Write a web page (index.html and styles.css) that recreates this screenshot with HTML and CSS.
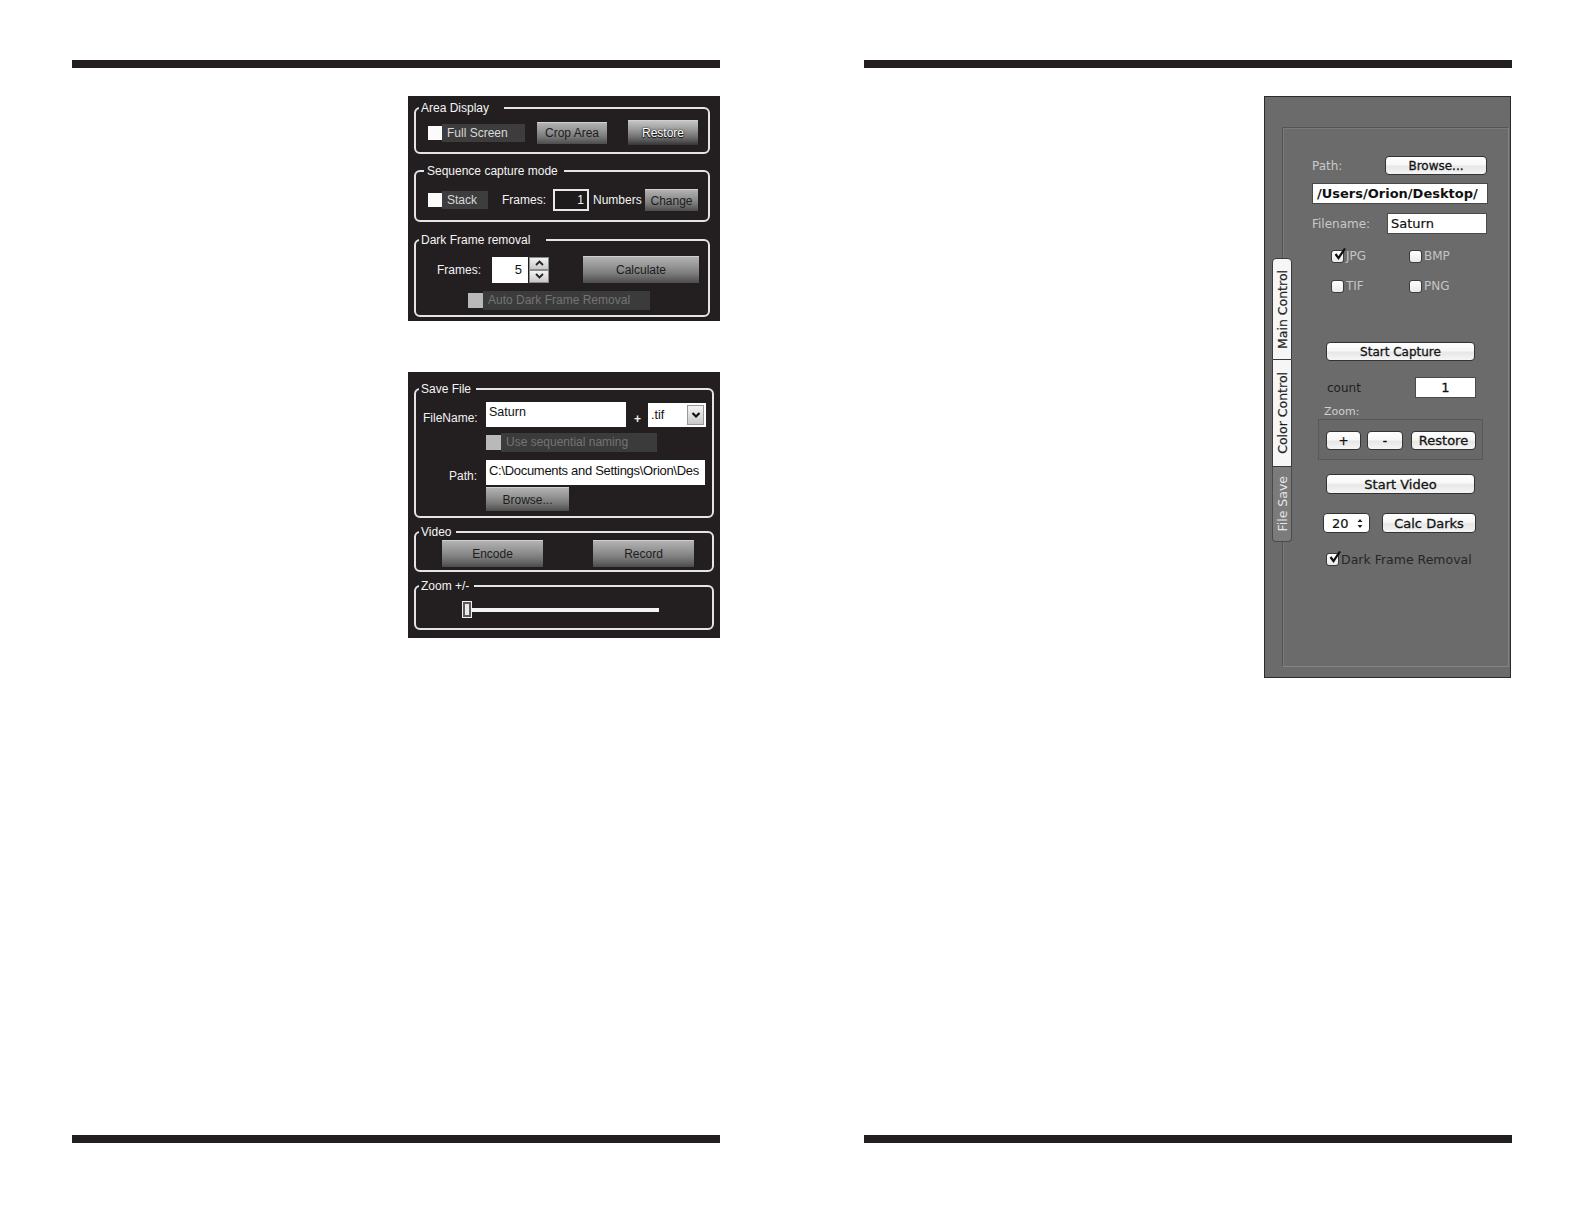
FILE: index.html
```html
<!DOCTYPE html>
<html>
<head>
<meta charset="utf-8">
<link rel="stylesheet" href="styles.css">
</head>
<body>
<div class="spread">
  <section class="page">
    <div class="rule"></div>
    <div class="page-body left-body">
      <div class="win-panel panel-a">
        <div class="group g-area">
          <span class="legend lg-area">Area Display</span>
          <div class="row row-area">
            <div class="wcheck"><span class="wbox"></span><span class="wlabel wl-full">Full Screen</span></div>
            <span class="wbtn b-crop">Crop Area</span>
            <span class="wbtn wbtn-hi b-restore">Restore</span>
          </div>
        </div>
        <div class="group g-seq">
          <span class="legend lg-seq">Sequence capture mode</span>
          <div class="row row-seq">
            <div class="wcheck"><span class="wbox"></span><span class="wlabel wl-stack">Stack</span></div>
            <span class="wtext t-frames1">Frames:</span>
            <span class="winput-dark">1</span>
            <span class="wtext t-numbers">Numbers</span>
            <span class="wbtn b-change">Change</span>
          </div>
        </div>
        <div class="group g-dark">
          <span class="legend lg-dark">Dark Frame removal</span>
          <div class="row row-dark1">
            <span class="wtext t-frames2">Frames:</span>
            <span class="winput w-five">5</span>
            <span class="wspin">
              <span class="spin-btn"><svg width="9" height="6" viewBox="0 0 9 6"><path d="M1 5 L4.5 1.5 L8 5" fill="none" stroke="#222" stroke-width="1.8"/></svg></span>
              <span class="spin-btn"><svg width="9" height="6" viewBox="0 0 9 6"><path d="M1 1 L4.5 4.5 L8 1" fill="none" stroke="#222" stroke-width="1.8"/></svg></span>
            </span>
            <span class="wbtn b-calc">Calculate</span>
          </div>
          <div class="row row-dark2">
            <div class="wcheck wcheck-off"><span class="wbox"></span><span class="wlabel wl-auto">Auto Dark Frame Removal</span></div>
          </div>
        </div>
      </div>

      <div class="win-panel panel-b">
        <div class="group g-save">
          <span class="legend lg-save">Save File</span>
          <div class="row row-fname">
            <span class="wtext t-fname">FileName:</span>
            <span class="winput w-saturn">Saturn</span>
            <span class="wtext t-plus">+</span>
            <span class="wselect"><span class="sel-text">.tif</span><span class="sel-btn"><svg width="10" height="8" viewBox="0 0 10 8"><path d="M1.5 2 L5 5.5 L8.5 2" fill="none" stroke="#111" stroke-width="2.2"/></svg></span></span>
          </div>
          <div class="row row-seqname">
            <div class="wcheck wcheck-off"><span class="wbox"></span><span class="wlabel wl-seqname">Use sequential naming</span></div>
          </div>
          <div class="row row-path">
            <span class="wtext t-path">Path:</span>
            <span class="winput w-path">C:\Documents and Settings\Orion\Des</span>
          </div>
          <div class="row row-browse">
            <span class="wbtn b-browse">Browse...</span>
          </div>
        </div>
        <div class="group g-video">
          <span class="legend lg-video">Video</span>
          <div class="row row-video">
            <span class="wbtn b-encode">Encode</span>
            <span class="wbtn b-record">Record</span>
          </div>
        </div>
        <div class="group g-zoom">
          <span class="legend lg-zoom">Zoom +/-</span>
          <div class="row row-zoom">
            <div class="slider"><span class="thumb"></span><span class="track"></span></div>
          </div>
        </div>
      </div>
    </div>
    <div class="rule"></div>
  </section>

  <section class="page">
    <div class="rule"></div>
    <div class="page-body right-body">
      <div class="mac-panel">
        <div class="tabs">
          <span class="tab tab-main"><span>Main Control</span></span>
          <span class="tab tab-color"><span>Color Control</span></span>
          <span class="tab tab-file"><span>File Save</span></span>
        </div>
        <div class="mac-box">
          <div class="mrow r-path">
            <span class="mlabel ml-path">Path:</span>
            <span class="mbtn b-mbrowse">Browse...</span>
          </div>
          <div class="mfield f-path">/Users/Orion/Desktop/</div>
          <div class="mrow r-fname">
            <span class="mlabel ml-fname">Filename:</span>
            <span class="mfield f-fname">Saturn</span>
          </div>
          <div class="mrow r-fmt">
            <span class="mcheck mc-first"><span class="mbox"><svg width="13" height="13" viewBox="0 0 13 13"><path d="M2.5 6 L5.5 10 L12 0.5" fill="none" stroke="#111" stroke-width="2.2"/></svg></span>JPG</span>
            <span class="mcheck"><span class="mbox"></span>BMP</span>
          </div>
          <div class="mrow r-fmt r-fmt2">
            <span class="mcheck mc-first"><span class="mbox"></span>TIF</span>
            <span class="mcheck"><span class="mbox"></span>PNG</span>
          </div>
          <span class="mbtn b-wide b-capture">Start Capture</span>
          <div class="mrow r-count">
            <span class="mlabel ml-count">count</span>
            <span class="mfield f-count">1</span>
          </div>
          <div class="ml-zoom">Zoom:</div>
          <div class="zoom-box">
            <span class="mbtn b-plus">+</span>
            <span class="mbtn b-minus">-</span>
            <span class="mbtn b-mrestore">Restore</span>
          </div>
          <span class="mbtn b-wide b-video">Start Video</span>
          <div class="mrow r-step">
            <span class="mstep"><span>20</span><svg width="6" height="11" viewBox="0 0 6 11"><path d="M0.5 4 L3 1 L5.5 4 Z M0.5 7 L3 10 L5.5 7 Z" fill="#222"/></svg></span>
            <span class="mbtn b-calcd">Calc Darks</span>
          </div>
          <div class="mrow r-dfr">
            <span class="mcheck"><span class="mbox"><svg width="13" height="13" viewBox="0 0 13 13"><path d="M2.5 6 L5.5 10 L12 0.5" fill="none" stroke="#111" stroke-width="2.2"/></svg></span>Dark Frame Removal</span>
          </div>
        </div>
      </div>
    </div>
    <div class="rule"></div>
  </section>
</div>
</body>
</html>
```

FILE: styles.css
```css
* { box-sizing: border-box; }
html, body { margin: 0; padding: 0; background: #ffffff; }
body { font-family: "Liberation Sans", Arial, sans-serif; }

.spread { display: flex; gap: 144px; padding: 60px 0 0 72px; }
.page { width: 648px; height: 1083px; display: flex; flex-direction: column; }
.rule { height: 8px; flex: none; background: #231f20; }
.page-body { flex: 1; }
.left-body { padding: 28px 0 0 336px; }
.right-body { padding: 28px 0 0 400px; }

/* ---------- Windows style panels ---------- */
.win-panel { width: 312px; background: #231f20; padding: 11px 0 0 6px; }
.panel-a { height: 225px; }
.panel-b { height: 266px; margin-top: 51px; padding-top: 16px; }

.group { position: relative; width: 296px; border: 2px solid #e4e4e4; border-radius: 6px; }
.panel-b .group { width: 300px; }
.g-area { height: 47px; }
.g-seq { height: 52px; margin-top: 16px; }
.g-dark { height: 78px; margin-top: 17px; }
.g-save { height: 130px; }
.g-video { height: 41px; margin-top: 13px; }
.g-zoom { height: 45px; margin-top: 13px; }

.legend {
  position: absolute; top: -9px; left: 3px;
  padding: 0 15px 0 2px; background: #231f20;
  color: #f4f4f4; font-size: 12px; line-height: 16px; white-space: nowrap;
}
.lg-seq { left: 8px; padding: 0 6px 0 3px; }
.lg-dark { padding-right: 16px; }
.lg-save, .lg-video, .lg-zoom { padding-right: 5px; }

.row { display: flex; align-items: center; }
.wtext { color: #f2f2f2; font-size: 12px; white-space: nowrap; }

.wcheck { display: flex; align-items: center; height: 18px; }
.wbox { width: 14px; height: 14px; background: #fbfbfb; flex: none; }
.wlabel { height: 18px; background: #3d3d3d; color: #d9d9d9; font-size: 12px; line-height: 18px; padding-left: 5px; white-space: nowrap; }
.wcheck-off .wbox { background: #b9b9b9; width: 15px; height: 15px; }
.wcheck-off .wlabel { color: #747474; background: #3b3b3b; height: 19px; line-height: 19px; }

.wbtn {
  display: flex; align-items: center; justify-content: center;
  height: 22px; font-size: 12px; color: #1c1c1c; white-space: nowrap;
  background: linear-gradient(#b2b2b2 0%, #969696 35%, #7a7a7a 65%, #4c4c4c 100%);
  border-top: 1px solid #d0d0d0;
}
.wbtn-hi {
  color: #ffffff;
  text-shadow: 0 0 2px #000, 0 1px 1px #000;
  background: linear-gradient(#c4c4c4 0%, #a2a2a2 30%, #6c6c6c 70%, #353535 100%);
}

/* area display */
.row-area { padding: 11px 0 0 12px; }
.wl-full { width: 83px; }
.b-crop { width: 70px; margin-left: 12px; }
.b-restore { width: 70px; height: 25px; margin-left: 21px; }

/* sequence */
.row-seq { padding: 17px 0 0 12px; height: 39px; }
.wl-stack { width: 46px; }
.t-frames1 { margin-left: 14px; width: 51px; }
.winput-dark {
  width: 36px; height: 22px; border: 2px solid #e8e8e8; background: #1e1b1c;
  color: #f2f2f2; font-size: 12px; text-align: right; padding: 1px 3px 0 0; line-height: 17px;
}
.t-numbers { margin-left: 4px; width: 52px; }
.b-change { width: 53px; margin-left: 0; }

/* dark frame */
.row-dark1 { padding: 15px 0 0 21px; height: 42px; }
.t-frames2 { width: 55px; }
.winput {
  display: block; background: #ffffff; color: #111; font-size: 12.5px; white-space: nowrap; overflow: hidden;
}
.w-five { width: 36px; height: 26px; text-align: right; padding: 5px 6px 0 0; font-size: 13px; }
.wspin { display: flex; flex-direction: column; gap: 0; margin-left: 1px; width: 20px; height: 26px; }
.spin-btn { flex: 1; display: flex; align-items: center; justify-content: center; background: linear-gradient(#f2f2f2, #c8c8c8); border: 1px solid #8a8a8a; }
.b-calc { width: 116px; height: 27px; margin-left: 34px; }
.row-dark2 { padding: 8px 0 0 52px; }
.wl-auto { width: 167px; }

/* save file */
.row-fname { padding: 12px 0 0 7px; height: 37px; }
.t-fname { width: 63px; margin-top: 6px; }
.w-saturn { width: 140px; height: 25px; padding: 3px 0 0 3px; }
.t-plus { margin: 8px 0 0 8px; width: 14px; font-weight: bold; }
.wselect { display: flex; align-items: center; width: 58px; height: 24px; background: #fff; padding: 0 2px 0 3px; }
.sel-text { flex: 1; font-size: 12.5px; color: #111; }
.sel-btn { width: 17px; height: 20px; display: flex; align-items: center; justify-content: center; background: linear-gradient(#f4f4f4, #c9c9c9); border: 1px solid #999; }
.row-seqname { padding: 6px 0 0 70px; }
.wl-seqname { width: 156px; }
.row-path { padding: 9px 0 0 33px; }
.t-path { width: 37px; margin-top: 6px; }
.w-path { width: 219px; height: 25px; padding: 3px 0 0 3px; font-size: 13px; letter-spacing: -0.3px; }
.row-browse { padding: 2px 0 0 70px; }
.b-browse { width: 83px; height: 24px; }

/* video */
.row-video { padding: 7px 0 0 26px; }
.b-encode, .b-record { width: 101px; height: 27px; }
.b-record { margin-left: 50px; }

/* zoom */
.row-zoom { padding: 15px 0 0 47px; }
.slider { display: flex; align-items: center; width: 196px; height: 15px; }
.thumb { width: 8px; height: 15px; background: #e9e9e9; border: 2px solid #5a5a5a; outline: 1px solid #f0f0f0; flex: none; }
.track { flex: 1; height: 4px; background: #f4f4f4; }

/* ---------- Mac style panel ---------- */
.mac-panel {
  position: relative; width: 247px; height: 582px;
  background: #6b6b6b; border: 1px solid #2b2b2b;
  padding: 30px 0 0 17px;
  font-family: "DejaVu Sans", Verdana, sans-serif;
}
.mac-box {
  width: 227px; height: 540px;
  border: 1px solid; border-color: #545454 #838383 #858585 #545454;
  box-shadow: inset 1px 1px 0 #7a7a7a;
  display: flex; flex-direction: column; align-items: flex-start;
}
.tabs { position: absolute; left: 7px; top: 161px; width: 20px; display: flex; flex-direction: column; z-index: 2; }
.tab {
  display: flex; align-items: center; justify-content: center;
  width: 20px; background: #f6f6f6; border: 1px solid #3a3a3a;
  color: #1d1d1d; font-size: 12.5px;
  -webkit-text-stroke: 0.2px #1d1d1d;
}
.tab span { writing-mode: vertical-rl; transform: rotate(180deg); white-space: nowrap; }
.tab-main { height: 102px; border-radius: 4px 4px 0 0; }
.tab-color { height: 107px; border-top: none; }
.tab-file { height: 75px; background: #7b7b7b; color: #e6e6e6; border-color: #4a4a4a; border-top: none; border-radius: 0 0 4px 4px; -webkit-text-stroke: 0; }

.mrow { display: flex; align-items: center; }
.mlabel { font-size: 12px; color: #c9c9c9; white-space: nowrap; }
.mbtn {
  display: flex; align-items: center; justify-content: center;
  height: 19px; font-size: 12px; color: #141414; white-space: nowrap;
  -webkit-text-stroke: 0.3px #141414;
  background: linear-gradient(#ffffff 0%, #f7f7f7 45%, #e7e7e7 55%, #f5f5f5 100%);
  border: 1px solid #333; border-radius: 4px;
}
.mfield {
  display: flex; align-items: center;
  background: #fff; border: 1px solid #4a4a4a; color: #111;
  font-size: 13px; white-space: nowrap; overflow: hidden;
}

.r-path { margin: 28px 0 0 29px; height: 19px; }
.ml-path { width: 73px; }
.b-mbrowse { width: 102px; }
.f-path { margin: 8px 0 0 29px; width: 176px; height: 21px; padding-left: 4px; font-weight: bold; }
.r-fname { margin: 9px 0 0 29px; height: 21px; }
.ml-fname { width: 75px; }
.f-fname { width: 100px; height: 21px; padding-left: 3px; -webkit-text-stroke: 0.2px #111; }

.r-fmt { margin: 16px 0 0 48px; height: 13px; }
.r-fmt2 { margin-top: 17px; }
.mcheck { display: flex; align-items: center; font-size: 12px; color: #c4c4c4; line-height: 13px; white-space: nowrap; }
.mc-first { width: 78px; }
.mbox {
  width: 13px; height: 13px; margin-right: 2px; flex: none;
  background: linear-gradient(#ffffff, #e9e9e9); border: 1px solid #3b3b3b; border-radius: 3px;
  display: flex; align-items: center; justify-content: center; overflow: visible;
}
.mbox svg { flex: none; margin: -4px -3px 0 0; }

.b-wide { width: 149px; margin-left: 43px; }
.b-capture { margin-top: 49px; }
.r-count { margin: 16px 0 0 44px; height: 21px; }
.ml-count { width: 88px; color: #1e1e1e; }
.f-count { width: 61px; height: 21px; justify-content: center; font-size: 13px; -webkit-text-stroke: 0.3px #111; }
.ml-zoom { margin: 8px 0 0 41px; height: 12px; line-height: 12px; font-size: 11px; color: #cfcfcf; }
.zoom-box {
  margin: 1px 0 0 35px; width: 165px; height: 41px;
  border: 1px solid #585858; background: #686868;
  display: flex; align-items: flex-start; padding: 11px 0 0 7px;
}
.b-plus { width: 35px; }
.b-minus { width: 36px; margin-left: 6px; }
.b-mrestore { width: 65px; margin-left: 8px; font-size: 13px; }
.b-video { margin-top: 14px; height: 20px; font-size: 13px; }
.r-step { margin: 19px 0 0 40px; height: 20px; }
.mstep {
  display: flex; align-items: center; justify-content: space-between;
  width: 47px; height: 20px; padding: 0 6px 0 8px;
  background: #fff; border: 1px solid #333; border-radius: 4px; font-size: 13px; color: #111;
  -webkit-text-stroke: 0.2px #111;
}
.b-calcd { width: 94px; height: 20px; margin-left: 12px; font-size: 13px; }
.r-dfr { margin: 20px 0 0 43px; height: 13px; }
.r-dfr .mcheck { color: #262626; font-size: 12.5px; }
```
